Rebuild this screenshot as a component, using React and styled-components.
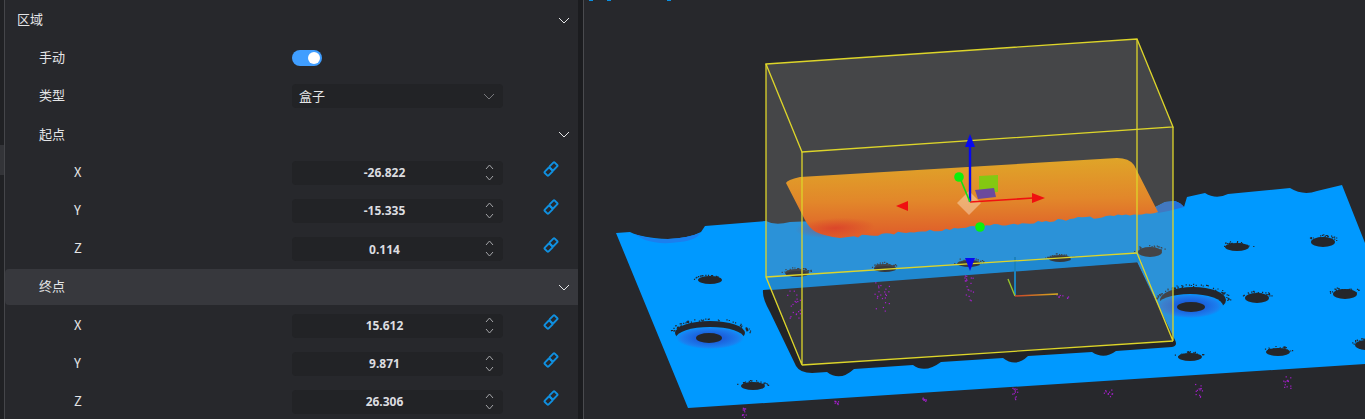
import React from 'react'
import styled, { createGlobalStyle } from 'styled-components'

const GlobalStyle = createGlobalStyle`
  html, body {
    margin: 0;
    height: 100%;
    overflow: hidden;
    background: #27282c;
  }
`

const Page = styled.div`
  display: flex;
  width: 1365px;
  height: 419px;
  overflow: hidden;
  background: #27282c;
  color: #e4e5e7;
  font-family: 'Noto Sans', 'Noto Sans CJK SC', sans-serif;
  font-size: 13px;
`

const Rail = styled.div`
  width: 4px;
  padding-top: 145px;
  background: #202124;
  border-right: 1px solid #45464a;
  flex: none;
`
const RailItem = styled.div`
  height: 30px;
  background: #333438;
`

const Panel = styled.div`
  width: 573px;
  flex: none;
  padding-top: 2px;
`

const Row = styled.div`
  display: grid;
  grid-template-columns: 287px 211px 1fr;
  align-items: center;
  height: 36px;
  margin-bottom: 2.2px;
  border-radius: 4px 0 0 4px;
  background: ${props => (props.$active ? '#37383d' : 'transparent')};
`
const Label = styled.span`
  grid-column: 1;
  padding-left: ${props => props.$indent}px;
  padding-bottom: 2px;
  font-family: 'Noto Sans CJK SC', sans-serif;
  font-size: 13px;
  line-height: 18px;
`
const RowEnd = styled.span`
  grid-column: 3;
  justify-self: end;
  display: flex;
  padding-right: 8px;
`
const LinkSlot = styled.span`
  grid-column: 3;
  display: flex;
  margin: -8px 0 0 40px;
`

const Toggle = styled.span`
  display: flex;
  justify-content: flex-end;
  align-items: center;
  width: 30px;
  height: 16px;
  padding: 0 2px;
  box-sizing: border-box;
  border-radius: 8px;
  background: #409eff;
`
const Knob = styled.span`
  width: 12px;
  height: 12px;
  border-radius: 50%;
  background: #fff;
`

const Field = styled.div`
  position: relative;
  display: flex;
  align-items: center;
  height: 24px;
  border-radius: 4px;
  background: #222326;
`
const SelectValue = styled.span`
  flex: 1;
  padding: 0 0 2px 7px;
  font-family: 'Noto Sans CJK SC', sans-serif;
  font-size: 13px;
`
const SelectArrow = styled.span`
  display: flex;
  padding-right: 8px;
  color: #77787c;
`
const NumberValue = styled.span`
  width: 100%;
  padding-right: 26px;
  box-sizing: border-box;
  text-align: center;
  font-size: 12px;
  font-weight: 700;
  color: #dcdde0;
`
const Stepper = styled.span`
  position: absolute;
  top: 3px;
  right: 9px;
  display: flex;
  flex-direction: column;
  gap: 5px;
  color: #a4a5a8;
`

const Gutter = styled.div`
  width: 5px;
  flex: none;
  background: #1b1c1f;
  border-right: 1px solid #4a4b4f;
`

const Viewport = styled.div`
  position: relative;
  flex: 1;
  min-width: 0;
`
const Scene = styled.svg`
  display: block;
  width: 781px;
  height: 419px;
`

// tool icons of a toolbar that is scrolled out above the picture, only their last pixel shows
const CutToolbar = styled.div`
  position: absolute;
  top: 0;
  left: 5px;
  display: flex;
`
const CutIcon = styled.span`
  width: 4px;
  height: 1px;
  margin-left: ${props => props.$gap}px;
  background: #0a8fe0;
`

const Chevron = ({ up, w = 10, h = 5, width = 1 }) => (
  <svg width={w + 2} height={h + 2} viewBox={`0 0 ${w + 2} ${h + 2}`} fill="none">
    <polyline
      points={
        up
          ? `1,${h + 1} ${w / 2 + 1},1 ${w + 1},${h + 1}`
          : `1,1 ${w / 2 + 1},${h + 1} ${w + 1},1`
      }
      stroke="currentColor"
      strokeWidth={width}
    />
  </svg>
)

const LinkIcon = () => (
  <svg width="16" height="16" viewBox="0 0 16 16" fill="none" stroke="#1090e0" strokeWidth="1.9">
    <rect x="7" y="2.6" width="7" height="5.4" rx="1" transform="rotate(-45 10.5 5.3)" />
    <rect x="2" y="8" width="7" height="5.4" rx="1" transform="rotate(-45 5.5 10.7)" />
  </svg>
)

const CoordRow = ({ axis, value }) => (
  <Row>
    <Label $indent={69}>{axis}</Label>
    <Field>
      <NumberValue>{value}</NumberValue>
      <Stepper>
        <Chevron up w={7} h={4} />
        <Chevron w={7} h={4} />
      </Stepper>
    </Field>
    <LinkSlot>
      <LinkIcon />
    </LinkSlot>
  </Row>
)

const SectionRow = ({ title, indent, active }) => (
  <Row $active={active}>
    <Label $indent={indent}>{title}</Label>
    <RowEnd>
      <Chevron />
    </RowEnd>
  </Row>
)

// small pseudo random, keeps the point cloud the same on every render
const rand = seed => {
  const x = Math.sin(seed * 127.1 + 11.7) * 43758.5453
  return x - Math.floor(x)
}

const holes = [
  [710, 280, 12, 4], [797, 273, 12, 4], [885, 268, 11, 4], [969, 264, 12, 4],
  [1060, 259, 12, 4], [1150, 252, 12, 5], [1237, 247, 12, 4], [1323, 242, 12, 5],
  [1257, 298, 12, 5], [1345, 294, 12, 5], [1190, 357, 12, 4], [1278, 352, 12, 4],
  [1367, 345, 12, 5], [753, 386, 12, 4],
]

const specks = []
holes.forEach(([cx, cy, rx, ry], i) => {
  for (let n = 0; n < 22; n++) {
    const a = rand(i * 40 + n) * Math.PI
    const r = 0.75 + rand(i * 70 + n) * 0.6
    specks.push([cx + Math.cos(a) * rx * r, cy - Math.sin(a) * ry * r - 1])
  }
})
;[[710, 333, 35, 13], [1193, 301, 33, 15]].forEach(([cx, cy, rx, ry], i) => {
  for (let n = 0; n < 60; n++) {
    const a = rand(i * 90 + n + 500) * Math.PI
    const r = 1 + rand(i * 30 + n + 800) * 0.16
    specks.push([cx + Math.cos(a) * rx * r, cy - Math.sin(a) * ry * r])
  }
})

const clusters = [
  [793, 304, 7, 14], [881, 295, 8, 16], [968, 288, 5, 13], [744, 412, 3, 5],
  [836, 402, 2, 2], [924, 399, 2, 2], [1015, 393, 3, 6], [1108, 393, 5, 4],
  [1198, 390, 4, 7], [1287, 383, 4, 7], [1062, 296, 6, 2],
]
const purple = []
clusters.forEach(([cx, cy, sx, sy], i) => {
  for (let n = 0; n < sy + 6; n++) {
    purple.push([cx + (rand(i * 11 + n) - 0.5) * sx * 2, cy + (rand(i * 17 + n + 300) - 0.5) * sy * 2])
  }
})

// lower rim of the scanned part, it frays where the scan ends
const rim = []
for (let x = 1154; x > 850; x -= 4) {
  const y = 212 + ((1158 - x) / 308) * 25
  rim.push(`L${x} ${(y + (rand(x) - 0.5) * 3.2).toFixed(1)}`)
}

// scene is drawn in page coordinates, hence the viewBox offset
const ViewportScene = () => (
  <Scene viewBox="584 0 781 419">
    <defs>
      <linearGradient id="heat" x1="0" y1="0" x2="0.06" y2="1">
        <stop offset="0" stopColor="#dfa828" />
        <stop offset="0.55" stopColor="#e2872a" />
        <stop offset="1" stopColor="#df5c2a" />
      </linearGradient>
      <radialGradient id="hot" cx="0.5" cy="0.5" r="0.5">
        <stop offset="0" stopColor="#d8302a" stopOpacity="0.6" />
        <stop offset="1" stopColor="#d8352a" stopOpacity="0" />
      </radialGradient>
      <radialGradient id="bore" cx="0.5" cy="0.5" r="0.5">
        <stop offset="0.4" stopColor="#1b60dc" />
        <stop offset="0.85" stopColor="#1a80f0" />
        <stop offset="1" stopColor="#0099ff" />
      </radialGradient>
      <linearGradient id="axisX" gradientUnits="userSpaceOnUse" x1="1015" y1="296" x2="1058" y2="294">
        <stop offset="0" stopColor="#c9402a" />
        <stop offset="1" stopColor="#d8b01e" />
      </linearGradient>
    </defs>

    {/* plate */}
    <path
      fill="#0099ff"
      d="M616 233 L630 232 Q642 238 668 239 Q690 238 701 232 L705 226 L766 221 Q775 226 790 222 L1155 207 L1165 202 L1175 201 Q1181 203 1184 207 L1187 197 L1205 193 Q1216 200 1228 194 L1290 188 Q1303 196 1317 191 L1342 185 L1365 243 L1365 364 L688 408 Z"
    />
    <path fill="#1a7fee" d="M634 234 Q650 240 668 239 Q688 238 700 233 Q697 240 680 242 Q660 245 645 240 Z" />
    <path fill="#2272dc" d="M1156 207 L1165 202 L1175 201 Q1181 203 1184 207 Q1170 211 1158 213 Z" />

    {/* counterbores */}
    <ellipse cx="710" cy="333" rx="35" ry="12" fill="#24262c" />
    <ellipse cx="710" cy="338" rx="34" ry="11" fill="url(#bore)" />
    <ellipse cx="709" cy="338" rx="13" ry="5" fill="#25262a" />
    <ellipse cx="1193" cy="300" rx="33" ry="13" fill="#24262c" />
    <ellipse cx="1190" cy="306" rx="33" ry="12" fill="url(#bore)" />
    <ellipse cx="1191" cy="307" rx="14" ry="5" fill="#25262a" />

    {holes.map(([cx, cy, rx, ry], i) => (
      <ellipse key={i} cx={cx} cy={cy} rx={rx} ry={ry} fill="#25262a" />
    ))}
    <path
      fill="#25262a"
      d={specks.map(([x, y]) => `M${x.toFixed(1)} ${y.toFixed(1)}h1.2v1.2h-1.2z`).join('')}
    />

    {/* raised block footprint */}
    <path
      fill="#232427"
      d="M763 290 L1137 262 L1175 340 Q1178 346 1172 347 L1116 351 Q1104 360 1092 352 L1028 356 Q1016 368 1003 358 L941 362 Q925 374 913 365 L854 369 Q840 382 827 372 L812 373 Q800 373 796 366 L770 312 Q762 298 763 290 Z"
    />

    {/* selection box */}
    <path
      fill="rgba(134,134,134,0.32)"
      d="M766 64 L1137 39 L1173 127 L1173 340 L802 365 L766 277 Z"
    />
    <path fill="#36373b" d="M770 289 L1137 262 L1173 340 L802 365 Z" />
    <path fill="#1f88d0" d="M768 278 L1137 253 L1142 262 L771 290 Z" />
    <ellipse cx="797" cy="274" rx="11" ry="3" fill="#37383c" />
    <ellipse cx="885" cy="269" rx="11" ry="3" fill="#37383c" />
    <ellipse cx="969" cy="264" rx="11" ry="3" fill="#37383c" />
    <ellipse cx="1060" cy="259" rx="11" ry="3" fill="#37383c" />

    {purple.map(([x, y], i) => (
      <rect key={i} x={x} y={y} width="1.2" height="1.2" fill="#a81fd0" />
    ))}

    {/* scanned part */}
    <path
      fill="url(#heat)"
      d={`M786 183 Q787 180 800 177 L1117 158 Q1129 158 1134 165 L1158 212 ${rim.join(' ')} L840 238 Q825 236 816 232 Q809 228 805 220 Z`}
    />
    <ellipse cx="835" cy="228" rx="40" ry="10" fill="url(#hot)" transform="rotate(-3 835 226)" />

    {/* world axes */}
    <path d="M1015 296 V257" stroke="#1b82bd" strokeWidth="2" />
    <path d="M1015 296 L1008 279" stroke="#9ccb2a" strokeWidth="1.3" />
    <path d="M1015 296 L1058 294" stroke="url(#axisX)" strokeWidth="1.5" />

    {/* box edges */}
    <g fill="none" stroke="#ddd52a" strokeWidth="1.3">
      <path d="M766 64 L1137 39 L1173 127 L802 152 Z" />
      <path d="M766 64 V277 L802 365 V152" />
      <path d="M1137 39 V253 L1173 341 V127" />
      <path d="M766 277 L1137 253" />
      <path d="M802 365 L1173 341" />
    </g>

    {/* transform gizmo */}
    <path fill="rgba(255,235,215,0.42)" d="M969 191 L981 203 L969 215 L957 203 Z" />
    <path fill="rgba(96,220,10,0.72)" d="M979 176 L998 175 L998 192 L979 193 Z" />
    <path fill="#6b4a9c" d="M975 190 L994 188 L996 197 L978 199 Z" />
    <path d="M970 202 V146" stroke="#0808f0" strokeWidth="2.4" />
    <path fill="#0808f0" d="M970 134 L975 147 H965 Z" />
    <path d="M970 202 L1033 198" stroke="#f01010" strokeWidth="1.6" />
    <path fill="#f01010" d="M1045 198 L1032 193 L1032 203 Z" />
    <path fill="#f01010" d="M896 206 L908 201 L908 211 Z" />
    <path d="M970 202 L960 178" stroke="#10e010" strokeWidth="1.6" />
    <circle cx="959" cy="177" r="4.8" fill="#0cf00c" />
    <circle cx="980" cy="227" r="4.8" fill="#0cf00c" />
    <path fill="#0808f0" d="M970 271 L975 258 H965 Z" />
  </Scene>
)

export default function App() {
  return (
    <Page>
      <GlobalStyle />
      <Rail>
        <RailItem />
      </Rail>
      <Panel>
        <SectionRow title="区域" indent={12} />
        <Row>
          <Label $indent={34}>手动</Label>
          <Toggle>
            <Knob />
          </Toggle>
        </Row>
        <Row>
          <Label $indent={34}>类型</Label>
          <Field>
            <SelectValue>盒子</SelectValue>
            <SelectArrow>
              <Chevron />
            </SelectArrow>
          </Field>
        </Row>
        <SectionRow title="起点" indent={34} />
        <CoordRow axis="X" value="-26.822" />
        <CoordRow axis="Y" value="-15.335" />
        <CoordRow axis="Z" value="0.114" />
        <SectionRow title="终点" indent={34} active />
        <CoordRow axis="X" value="15.612" />
        <CoordRow axis="Y" value="9.871" />
        <CoordRow axis="Z" value="26.306" />
      </Panel>
      <Gutter />
      <Viewport>
        <CutToolbar>
          <CutIcon $gap={0} />
          <CutIcon $gap={14} />
          <CutIcon $gap={56} />
        </CutToolbar>
        <ViewportScene />
      </Viewport>
    </Page>
  )
}
